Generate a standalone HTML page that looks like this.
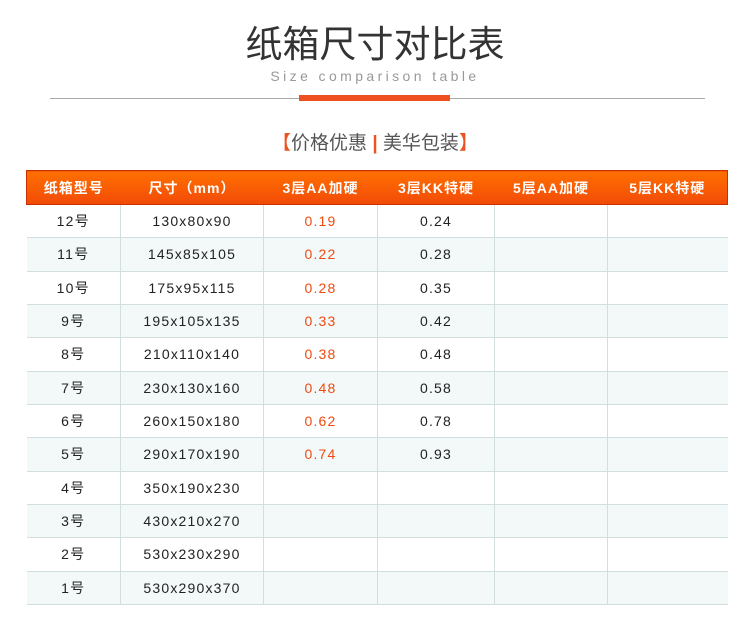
<!DOCTYPE html>
<html><head><meta charset="utf-8"><style>
body{margin:0;width:750px;height:621px;background:#fff;font-family:"Liberation Sans","Noto Sans CJK SC",sans-serif;position:relative;overflow:hidden}
.t{position:absolute;left:0;width:750px;text-align:center}
table{position:absolute;left:26px;top:170px;width:701px;border-collapse:collapse;table-layout:fixed}
th{height:33px;color:#fff;font-size:14px;font-weight:bold;letter-spacing:1px;padding:0;background:linear-gradient(#ff7000,#f24a08);border-top:1px solid #c83000;border-bottom:1px solid #c83000}
th:first-child{border-left:1px solid #c83000}th:last-child{border-right:1px solid #c83000}
td{height:32.33px;border:1px solid #d3dfdf;border-top:none;text-align:center;vertical-align:middle;font-size:14px;line-height:20px;color:#222;letter-spacing:1.2px;padding:0}
td:first-child{border-left:none}td:last-child{border-right:none}
tr:nth-child(odd) td{background:#f3f9f9}
td.o{color:#ee4a10}
</style></head><body>
<div class="t" style="top:14px;font-size:37px;color:#333">纸箱尺寸对比表</div>
<div class="t" style="top:68px;font-size:14px;color:#999;letter-spacing:3.4px">Size comparison table</div>
<div style="position:absolute;left:50px;top:98px;width:655px;height:1px;background:#aaa"></div>
<div style="position:absolute;left:299px;top:95px;width:151px;height:6px;background:#ee5020"></div>
<div class="t" style="top:128px;font-size:19px;color:#555"><span style="color:#ee5020">【</span>价格优惠 <span style="color:#ee5020;font-weight:bold">|</span> 美华包装<span style="color:#ee5020">】</span></div>
<table>
<colgroup><col style="width:94px"><col style="width:143px"><col style="width:114px"><col style="width:117px"><col style="width:113px"><col style="width:120px"></colgroup>
<tr><th>纸箱型号</th><th>尺寸（mm）</th><th>3层AA加硬</th><th>3层KK特硬</th><th>5层AA加硬</th><th>5层KK特硬</th></tr>
<tr><td>12号</td><td>130x80x90</td><td class="o">0.19</td><td>0.24</td><td></td><td></td></tr>
<tr><td>11号</td><td>145x85x105</td><td class="o">0.22</td><td>0.28</td><td></td><td></td></tr>
<tr><td>10号</td><td>175x95x115</td><td class="o">0.28</td><td>0.35</td><td></td><td></td></tr>
<tr><td>9号</td><td>195x105x135</td><td class="o">0.33</td><td>0.42</td><td></td><td></td></tr>
<tr><td>8号</td><td>210x110x140</td><td class="o">0.38</td><td>0.48</td><td></td><td></td></tr>
<tr><td>7号</td><td>230x130x160</td><td class="o">0.48</td><td>0.58</td><td></td><td></td></tr>
<tr><td>6号</td><td>260x150x180</td><td class="o">0.62</td><td>0.78</td><td></td><td></td></tr>
<tr><td>5号</td><td>290x170x190</td><td class="o">0.74</td><td>0.93</td><td></td><td></td></tr>
<tr><td>4号</td><td>350x190x230</td><td></td><td></td><td></td><td></td></tr>
<tr><td>3号</td><td>430x210x270</td><td></td><td></td><td></td><td></td></tr>
<tr><td>2号</td><td>530x230x290</td><td></td><td></td><td></td><td></td></tr>
<tr><td>1号</td><td>530x290x370</td><td></td><td></td><td></td><td></td></tr>
</table>
</body></html>
